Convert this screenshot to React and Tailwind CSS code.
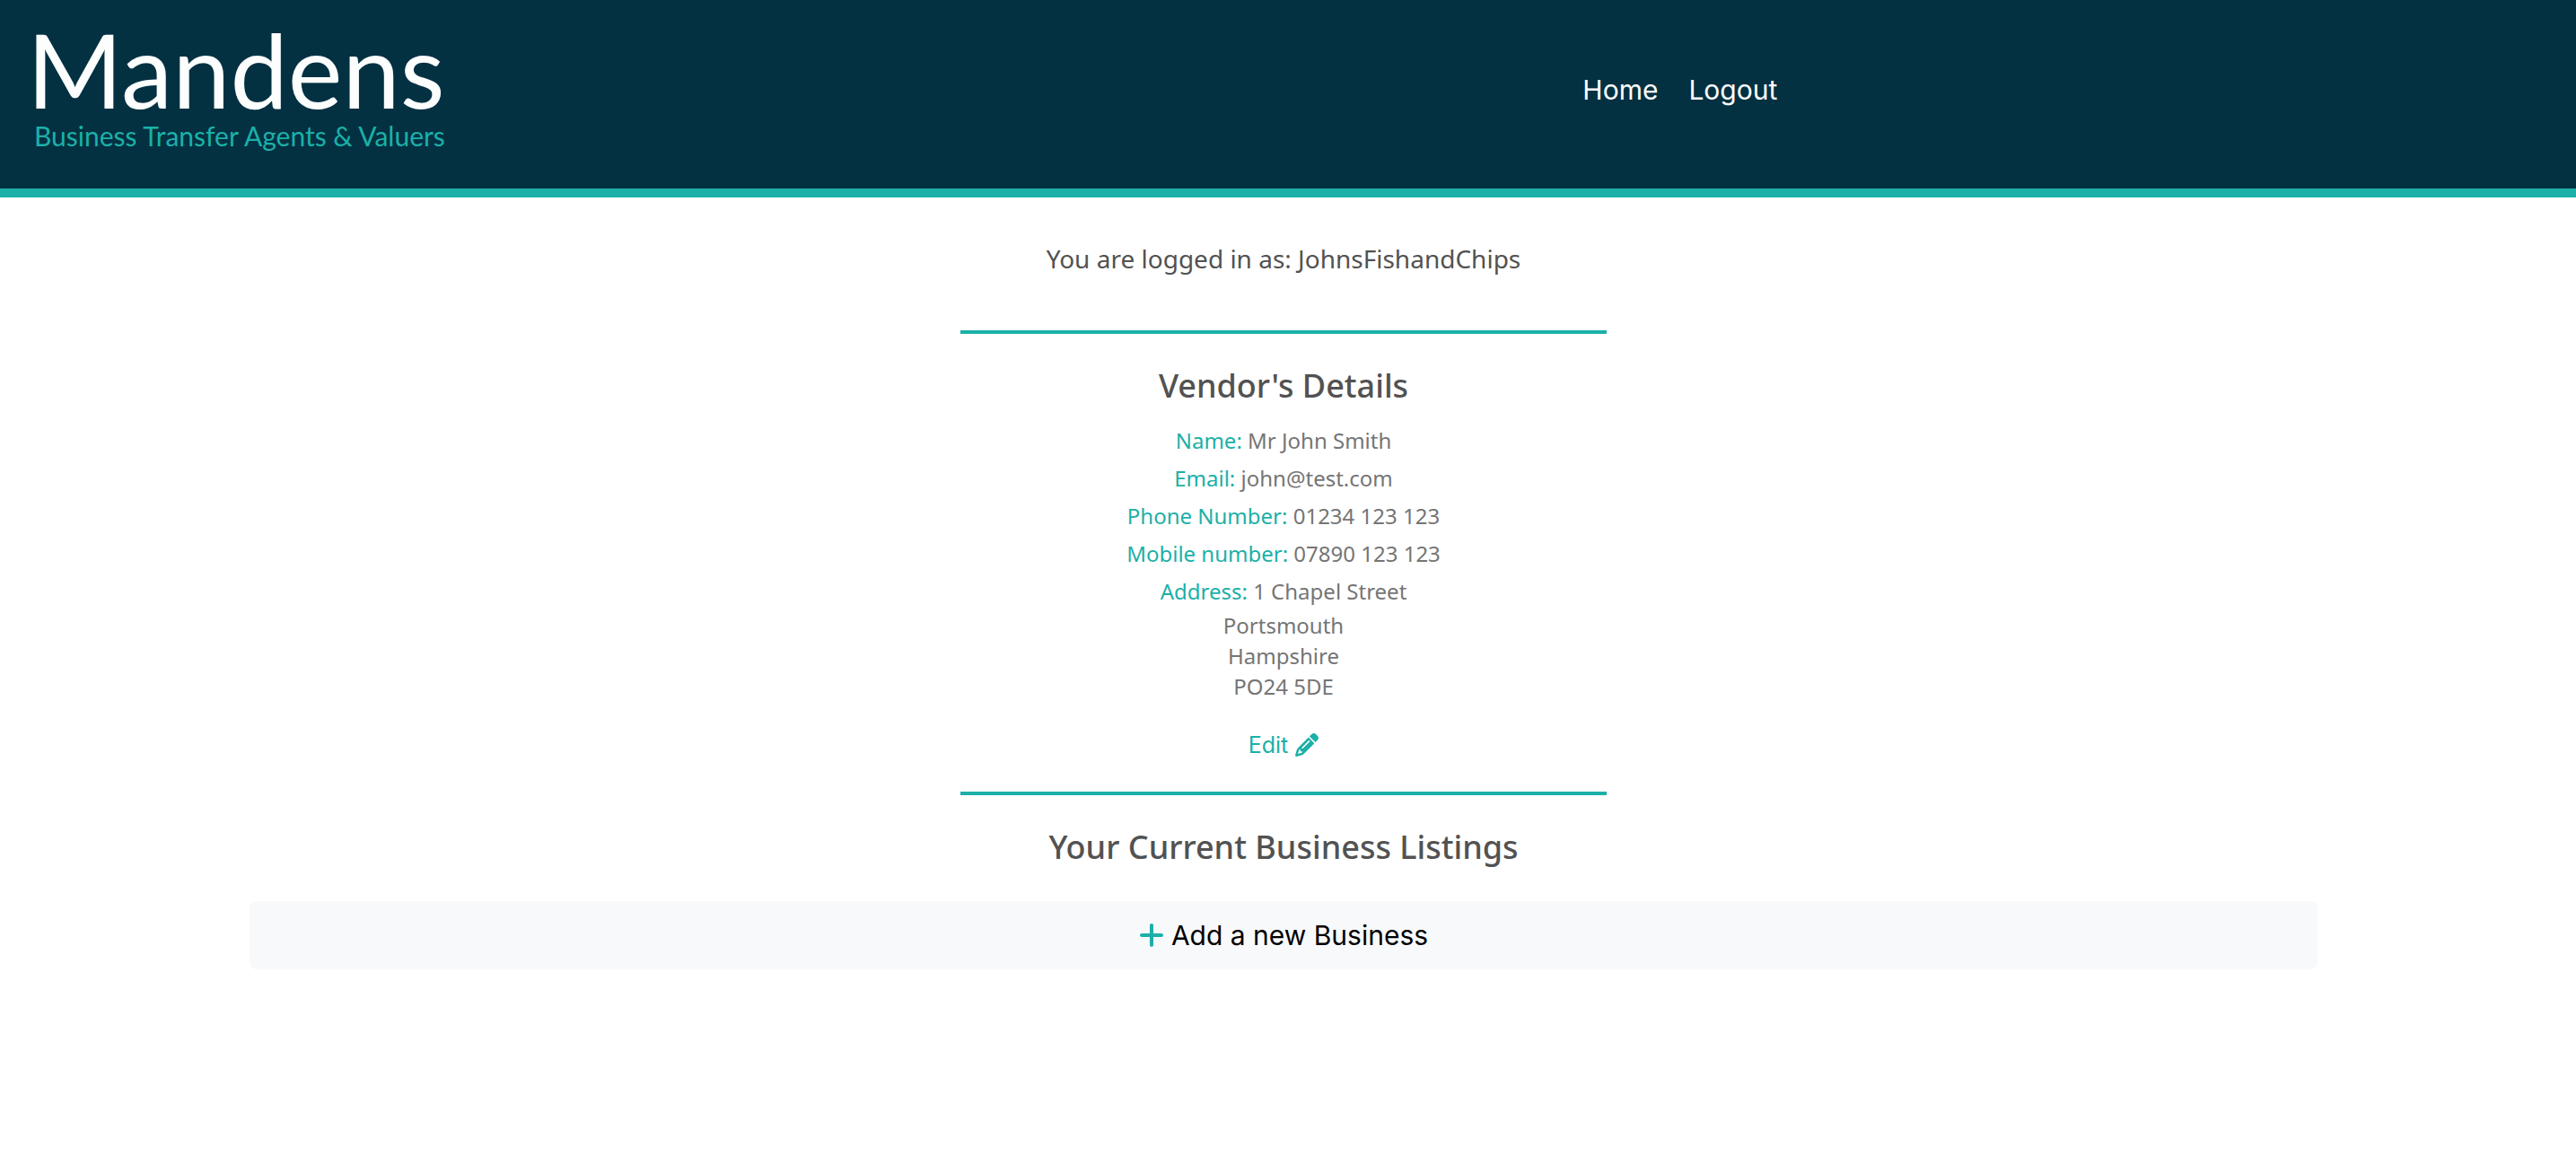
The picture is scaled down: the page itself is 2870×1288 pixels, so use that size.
import React from "react";
import { FaPencil, FaPlus } from "react-icons/fa6";

const details = [
  ["Name:", "Mr John Smith"],
  ["Email:", "john@test.com"],
  ["Phone Number:", "01234 123 123"],
  ["Mobile number:", "07890 123 123"],
  ["Address:", "1 Chapel Street"],
];

const addressLines = ["Portsmouth", "Hampshire", "PO24 5DE"];

function Logo() {
  return (
    <svg
      viewBox="0 0 520 210"
      className="h-[210px] w-[520px] shrink-0 font-['Lato',sans-serif]"
      role="img"
      aria-label="Mandens Business Transfer Agents & Valuers"
    >
      <text x="30" y="121" fontSize="115" fill="#fcfdfd">Mandens</text>
      <text x="38" y="163" fontSize="30" fill="#1cb0a8">Business Transfer Agents &amp; Valuers</text>
    </svg>
  );
}

function Header() {
  return (
    <header className="flex items-start border-b-[10px] border-[#1cb0a8] bg-[#033142]">
      <a href="#home">
        <Logo />
      </a>
      <nav className="mr-[31%] ml-auto flex gap-[34px] pt-20 text-[30px] leading-10 text-white">
        <a href="#home">Home</a>
        <a href="#logout">Logout</a>
      </nav>
    </header>
  );
}

function Divider({ className }) {
  return <hr className={`w-full max-w-[720px] border-0 bg-[#1cb0a8] h-1 ${className}`} />;
}

function Heading({ children }) {
  return (
    <h2 className="mt-[34px] text-[36px] leading-12 font-medium text-[#525252]">{children}</h2>
  );
}

export default function App() {
  return (
    <div className="min-h-screen bg-white font-['Inter',sans-serif]">
      <Header />
      <main className="flex flex-col items-center pt-12 pr-[10px] text-center font-['Noto_Sans',sans-serif]">
        <p className="text-[28px] leading-10 text-[#525252]">
          You are logged in as: JohnsFishandChips
        </p>
        <Divider className="mt-[60px]" />

        <Heading>Vendor's Details</Heading>
        <dl className="mt-4 text-2xl text-[#757575]">
          {details.map(([label, value]) => (
            <div key={label} className="leading-[42px]">
              <dt className="inline text-[#1cb0a8]">{label}</dt>{" "}
              <dd className="inline">{value}</dd>
            </div>
          ))}
        </dl>
        <address className="text-2xl leading-[34px] text-[#757575] not-italic">
          {addressLines.map((line) => (
            <div key={line}>{line}</div>
          ))}
        </address>
        <a
          href="#edit"
          className="mt-7 flex items-center gap-2 font-['Inter',sans-serif] text-[25px] leading-10 text-[#1cb0a8]"
        >
          Edit <FaPencil className="size-[26px]" />
        </a>
        <Divider className="mt-8" />

        <Heading>Your Current Business Listings</Heading>
        <button
          type="button"
          className="mt-9 flex h-[76px] w-full max-w-[2304px] items-center justify-center gap-2 rounded-lg bg-[#f8f9fb] font-['Inter',sans-serif] text-[30px] leading-10 text-black"
        >
          <FaPlus className="h-8 w-7 text-[#1cb0a8]" />
          Add a new Business
        </button>
      </main>
    </div>
  );
}
